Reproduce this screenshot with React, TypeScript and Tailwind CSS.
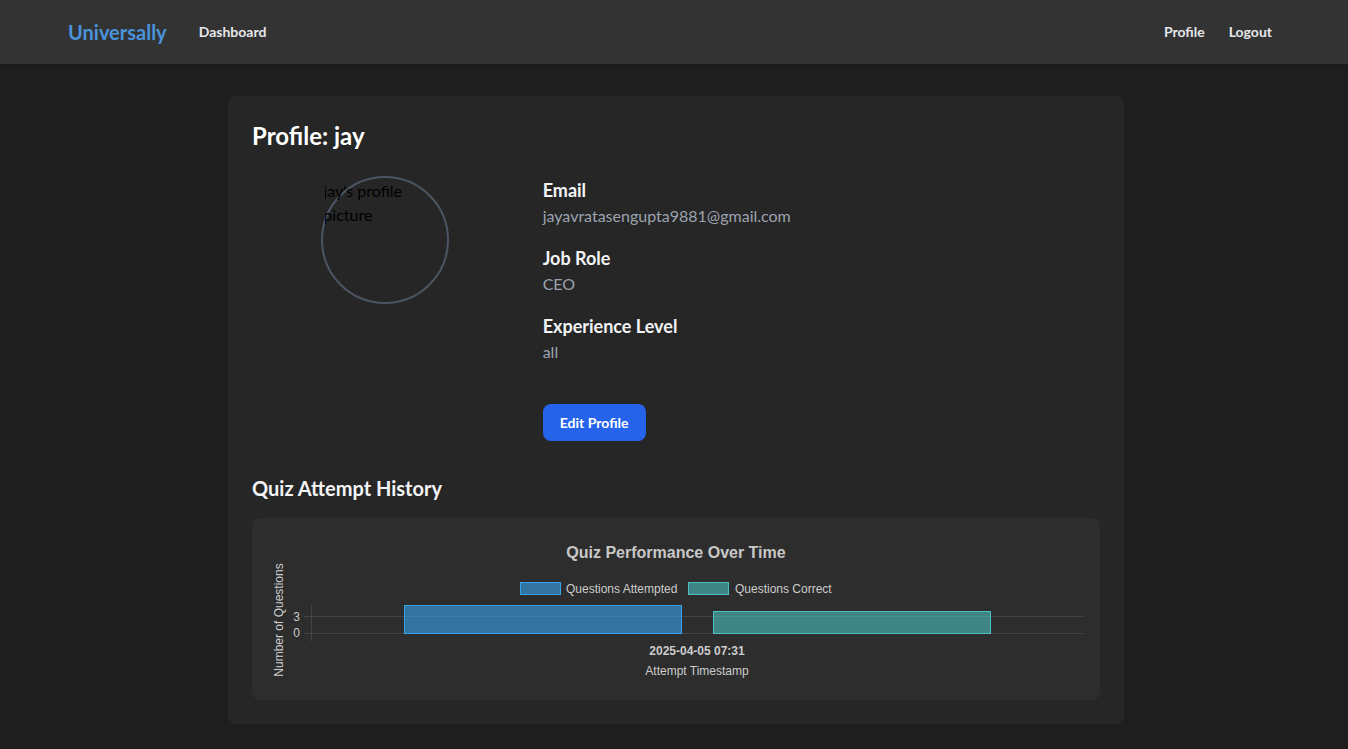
import React from "react";

const font = { fontFamily: '"Lato", "Open Sans", sans-serif' };

function Chart() {
  const txt = "#cccccc";
  return (
    <svg width="816" height="150" viewBox="0 0 816 150" style={{ fontFamily: '"Liberation Sans", Arial, sans-serif' }}>
      <text x="408" y="18" textAnchor="middle" dominantBaseline="central" fontSize="16" fontWeight="bold" fill="#c8c8c8">
        Quiz Performance Over Time
      </text>
      <rect x="252.5" y="48.5" width="40" height="12" fill="rgba(54,162,235,0.6)" stroke="#36a2eb" strokeWidth="1" />
      <text x="298" y="54.5" dominantBaseline="central" fontSize="12" fill={txt}>Questions Attempted</text>
      <rect x="420.5" y="48.5" width="40" height="12" fill="rgba(75,192,192,0.6)" stroke="#4bc0c0" strokeWidth="1" />
      <text x="467" y="54.5" dominantBaseline="central" fontSize="12" fill={txt}>Questions Correct</text>

      <text transform="translate(11 86) rotate(-90)" textAnchor="middle" dominantBaseline="central" fontSize="12" fill={txt}>
        Number of Questions
      </text>
      <line x1="36" y1="82.5" x2="815" y2="82.5" stroke="#444444" strokeWidth="1" />
      <line x1="36" y1="99.5" x2="815" y2="99.5" stroke="#444444" strokeWidth="1" />
      <line x1="43.5" y1="71" x2="43.5" y2="107" stroke="#444444" strokeWidth="1" />
      <text x="32" y="82.5" textAnchor="end" dominantBaseline="central" fontSize="12" fill={txt}>3</text>
      <text x="32" y="99" textAnchor="end" dominantBaseline="central" fontSize="12" fill={txt}>0</text>

      <rect x="136.5" y="71.5" width="277" height="28" fill="rgba(54,162,235,0.6)" stroke="#36a2eb" strokeWidth="1" />
      <rect x="445.5" y="77.5" width="277" height="22" fill="rgba(75,192,192,0.6)" stroke="#4bc0c0" strokeWidth="1" />

      <text x="429" y="117" textAnchor="middle" dominantBaseline="central" fontSize="12" fontWeight="bold" fill={txt}>
        2025-04-05 07:31
      </text>
      <text x="429" y="137" textAnchor="middle" dominantBaseline="central" fontSize="12" fill={txt}>
        Attempt Timestamp
      </text>
    </svg>
  );
}

export default function App() {
  return (
    <div className="min-h-screen bg-[#1e1e1e]" style={font}>
      <nav className="h-16 bg-[#333333] flex items-center justify-between pl-[68px] pr-[76px] shadow-md">
        <div className="flex items-center gap-8">
          <span className="text-xl font-bold text-[#4a93dc]">Universally</span>
          <span className="text-sm font-bold text-[#e5e7eb]">Dashboard</span>
        </div>
        <div className="flex items-center gap-6">
          <span className="text-sm font-bold text-[#e5e7eb]">Profile</span>
          <span className="text-sm font-bold text-[#e5e7eb]">Logout</span>
        </div>
      </nav>

      <main className="pt-8 pl-[4px]">
        <div className="mx-auto w-[896px] bg-[#262626] rounded-lg p-6">
          <h1 className="text-2xl font-bold text-white leading-8 mb-6">Profile: jay</h1>
          <div className="grid grid-cols-3 gap-6">
            <div className="flex justify-center">
              <div className="w-32 h-32 rounded-full border-2 border-[#4b5563] p-[1px] pl-[2px]">
                <div className="w-full h-full overflow-hidden">
                  <div className="text-black text-base leading-6 -ml-[2px] w-[126px]">jay's profile picture</div>
                </div>
              </div>
            </div>
            <div className="col-span-2">
              <div className="flex flex-col gap-4">
                <div>
                  <div className="text-lg font-bold text-[#f3f4f6] leading-7">Email</div>
                  <div className="text-base text-[#9ca3af] leading-6">jayavratasengupta9881@gmail.com</div>
                </div>
                <div>
                  <div className="text-lg font-bold text-[#f3f4f6] leading-7">Job Role</div>
                  <div className="text-base text-[#9ca3af] leading-6">CEO</div>
                </div>
                <div>
                  <div className="text-lg font-bold text-[#f3f4f6] leading-7">Experience Level</div>
                  <div className="text-base text-[#9ca3af] leading-6">all</div>
                </div>
              </div>
              <button className="mt-10 bg-[#2563eb] text-white text-sm font-bold rounded-lg h-[37px] w-[103px]">
                Edit Profile
              </button>
            </div>
          </div>

          <h2 className="mt-[33px] text-xl font-bold text-[#f3f4f6] leading-7 mb-4">Quiz Attempt History</h2>
          <div className="bg-[#2d2d2d] rounded-lg p-4">
            <Chart />
          </div>
        </div>
      </main>
    </div>
  );
}
